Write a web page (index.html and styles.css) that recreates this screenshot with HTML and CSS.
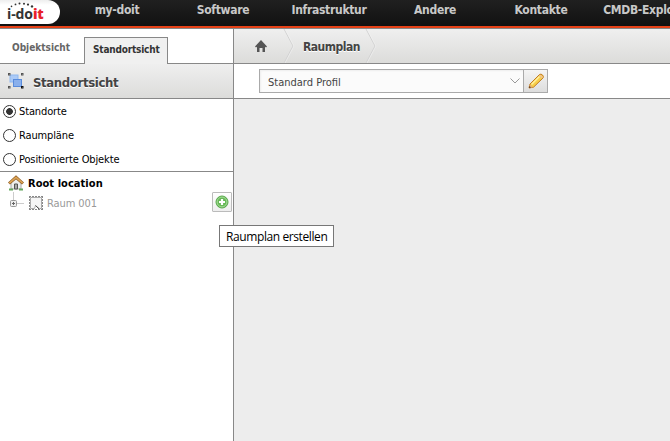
FILE: index.html
```html
<!DOCTYPE html>
<html lang="de">
<head>
<meta charset="utf-8">
<title>i-doit</title>
<link rel="stylesheet" href="styles.css">
</head>
<body>
<header class="topbar">
  <div class="logo">
    <svg class="logo-dots" width="34" height="8" viewBox="0 0 34 8"><g fill="#333"><circle cx="2.500" cy="4.400" r=".8"/><circle cx="6.500" cy="2.400" r=".9"/><circle cx="10.500" cy="1.500" r="1"/><circle cx="15" cy="1.700" r="1"/><circle cx="19" cy="2.600" r="1.100"/><circle cx="23" cy="4.400" r="1.200"/></g></svg>
    <span class="logo-text">i-do<b>it</b></span>
  </div>
  <nav class="menu">
    <a>my-doit</a><a>Software</a><a>Infrastruktur</a><a>Andere</a><a>Kontakte</a><a>CMDB-Explorer</a>
  </nav>
</header>
<div class="app">
  <aside class="side">
    <div class="tabs"><a class="tab">Objektsicht</a><a class="tab active">Standortsicht</a></div>
    <h2 class="title">
      <svg width="18" height="18" viewBox="0 0 18 18"><rect x="3" y="3" width="8" height="7" fill="#abcaf7" stroke="#8fb8ef"/><rect x="6.500" y="7.500" width="8" height="7" fill="#8ab0ec" stroke="#5a8cdc"/><g fill="#ddd" stroke="#555"><rect x="1.500" y="1.500" width="1.500" height="1.500"/><rect x="14.500" y="1.500" width="1.500" height="1.500"/><rect x="1.500" y="14.500" width="1.500" height="1.500"/><rect x="14.500" y="14.500" width="1.500" height="1.500" stroke="#111"/></g></svg>
      <span>Standortsicht</span>
    </h2>
    <div class="radios">
      <label><i class="radio on"></i><span>Standorte</span></label>
      <label><i class="radio"></i><span>Raumpläne</span></label>
      <label><i class="radio"></i><span>Positionierte Objekte</span></label>
    </div>
    <div class="tree">
      <div class="root">
        <svg width="16" height="16" viewBox="0 0 16 16"><path d="M3 7 8 2.500 13 7v7H3z" fill="#eee" stroke="#aaa"/><path d="M6.500 9h3v5h-3z" fill="#aaa" stroke="#555"/><path d="M1 14.500h4M11 14.500h4" stroke="#65a75e" stroke-width="2"/><path d="M1 8.500 8 2.300l7 6.200" fill="none" stroke="#8c5b25" stroke-width="3"/><path d="M1.300 8.200 8 2.300l6.700 5.900" fill="none" stroke="#dda455" stroke-width="1.700"/></svg>
        <span>Root location</span>
      </div>
      <div class="node">
        <svg class="branch" width="18" height="20" viewBox="0 0 18 20"><path d="M5.500 0v8M9 11.500h7" stroke="#ccc"/><rect x="2.500" y="8.500" width="6" height="6" rx="1" fill="#eee" stroke="#999"/><path d="M4 11.500h3M5.500 10v3" stroke="#666"/></svg>
        <svg class="room" width="16" height="16" viewBox="0 0 16 16"><path d="M2.500 2.500h11v11h-2l-4-3-1 3h-4z" fill="#f5f5f5" stroke="#aaa"/><path d="M7.500 10.500 11 14" stroke="#555"/><path d="M1 1.500h14M1 14.500h14M1.500 1v14M14.500 1v14" stroke="#888" stroke-dasharray="2 1"/></svg>
        <span>Raum 001</span>
        <button class="add"><svg width="14" height="14" viewBox="0 0 14 14"><circle cx="7" cy="7" r="6" fill="#67b956" stroke="#58a84b"/><circle cx="7" cy="7" r="4.900" fill="none" stroke="#a7dc9b"/><path d="M7 4v6M4 7h6" stroke="#fff" stroke-width="2.200"/></svg></button>
      </div>
    </div>
  </aside>
  <main class="main">
    <div class="crumbs">
      <svg class="home" width="12" height="12" viewBox="0 0 12 12"><path d="M0 6.500 6 0l6 6.500-1 1-1-.8V12H7.500V8h-3v4H2V6.700l-1 .8z" fill="#555"/></svg>
      <svg class="arrow" width="12" height="34" viewBox="0 0 12 34"><path d="M1 0 10 17 1 34" fill="none" stroke="#d2d2d2"/><path d="M2 0 11 17 2 34" fill="none" stroke="#f2f2f2" stroke-width=".6"/></svg>
      <span>Raumplan</span>
      <svg class="arrow" width="12" height="34" viewBox="0 0 12 34"><path d="M1 0 10 17 1 34" fill="none" stroke="#d2d2d2"/><path d="M2 0 11 17 2 34" fill="none" stroke="#f2f2f2" stroke-width=".6"/></svg>
    </div>
    <div class="toolbar">
      <div class="select"><span>Standard Profil</span><svg width="10" height="6" viewBox="0 0 10 6"><path d="m.5.500 4.500 4.500L9.500.5" fill="none" stroke="#999"/></svg></div>
      <button class="edit"><svg width="16" height="16" viewBox="0 0 16 16"><path d="m1 15 1-4L11.500 1.500q1.500-1 3 .5t.5 3L5.500 14.200z" fill="#f7cf4b" stroke="#c17b22"/><path d="m3.500 11.500 8-8" stroke="#fff0a0" stroke-width="1.500"/><path d="m11 2.500 3 3 1-1.500-2.500-2.300z" fill="#efc395"/><path d="m1 15 .8-3.500 3 2.700z" fill="#e0b080"/><path d="m1 15 .3-2 1.700 1.600z" fill="#5a3416"/></svg></button>
    </div>
    <div class="canvas"></div>
  </main>
</div>
<div class="tooltip"><span>Raumplan erstellen</span></div>
</body>
</html>
```

FILE: styles.css
```css
* { box-sizing: border-box; }
body { margin: 0; width: 670px; height: 441px; overflow: hidden; background: #fff; font: 11px "DejaVu Sans Condensed", "DejaVu Sans", sans-serif; font-stretch: condensed; color: #000; white-space: nowrap; }
svg { display: block; flex: none; }
.topbar { display: flex; height: 29px; background: linear-gradient(#202020, #111 26px, #e64117 26px, #e64117 28px, #888 28px); overflow: hidden; }
.logo { position: relative; flex: none; width: 60px; height: 24px; background: linear-gradient(#eee, #fff 5px); border-radius: 0 12px 12px 0; padding: 6px 0 0 7px; }
.logo-dots { position: absolute; left: 9px; top: 2px; }
.logo-text { display: block; font: bold 14px/16px "Open Sans", sans-serif; color: #333; letter-spacing: -.1px; }
.logo-text b { color: #e8212b; }
.menu { display: flex; margin-left: 4px; }
.menu a { flex: none; width: 106px; text-align: center; line-height: 20px; font-weight: bold; font-size: 12px; letter-spacing: -.3px; color: #c8c8c8; }
.app { display: flex; height: 412px; }
.side { flex: none; width: 234px; border-right: 1px solid #888; }
.tabs { display: flex; height: 35px; border-bottom: 1px solid #888; align-items: flex-end; }
.tab { width: 84px; padding-left: 12px; height: 27px; font: bold 10px/24px "DejaVu Sans Condensed", sans-serif; font-stretch: condensed; color: #666; }
.tab.active { margin-bottom: -1px; padding-left: 8px; background: #f0f0f0; border: 1px solid #888; border-bottom: 0; color: #333; letter-spacing: -.2px; }
.title { display: flex; align-items: center; height: 35px; margin: 0; padding-left: 7px; background: linear-gradient(#efefef, #dcdcda); border-bottom: 1px solid #888; font-size: 13px; letter-spacing: -.35px; color: #444; }
.title span { margin: 2px 0 0 8px; text-shadow: 0 1px #fff; }
.radios { height: 73px; border-bottom: 1px solid #888; }
.radios label { display: flex; height: 24px; align-items: center; padding-left: 3px; letter-spacing: -.13px; }
.radio { width: 13px; height: 13px; border: 1px solid #333; border-radius: 50%; margin-right: 3px; background: #fff; }
.radio.on { background: radial-gradient(circle, #333 3px, #fff 3.700px); }
.tree { padding-top: 3px; }
.root, .node { display: flex; align-items: center; padding-left: 8px; }
.root { height: 16px; font-weight: bold; letter-spacing: .05px; }
.root span { margin-left: 4px; }
.node { height: 22px; color: #999; }
.branch { margin-top: -1px; }
.room { margin: 1px 0 0 2px; }
.node span { margin: 2px 0 0 3px; letter-spacing: -.1px; }
.node button { margin-left: auto; margin-right: 1px; }
.add { width: 20px; height: 20px; padding: 2px; background: linear-gradient(#fff, #eee); border: 1px solid #bbb; border-radius: 1px; }
.main { flex: 1; display: flex; flex-direction: column; }
.crumbs { display: flex; height: 35px; align-items: center; background: linear-gradient(#efefef, #dcdcda); border-bottom: 1px solid #888; font-weight: bold; font-size: 12px; letter-spacing: -.5px; color: #444; padding-left: 21px; }
.crumbs span { width: 62px; margin-left: 8px; padding-top: 2px; text-shadow: 0 1px #fff; }
.crumbs .home { margin-top: -1px; }
.home + .arrow { margin-left: 16px; }
.toolbar { display: flex; height: 35px; padding: 5px 0 0 25px; border-bottom: 1px solid #888; }
.select { display: flex; align-items: center; width: 265px; height: 24px; border: 1px solid #aaa; background: #fbfbfb; box-shadow: inset 1px 1px 2px #eee; padding: 0 3px 0 8px; color: #444; }
.select span { padding-top: 2px; }
.select svg { margin-left: auto; }
.edit { width: 25px; height: 24px; margin-left: -1px; padding: 3px 4px; border: 1px solid #aaa; background: linear-gradient(#f4f4f4, #ddd); }
.canvas { flex: 1; background: #ededed; }
.tooltip { position: absolute; left: 219px; top: 225px; width: 115px; height: 22px; padding-left: 6px; border: 1px solid #777; background: #fff; font: 12px/22px "Open Sans", sans-serif; letter-spacing: -.4px; }
```
